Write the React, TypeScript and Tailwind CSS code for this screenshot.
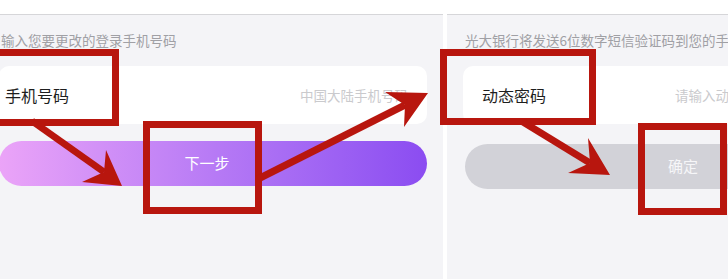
import React from "react";

const RED = "#b8160e";

function Arrow({ x1, y1, nx, ny, tip, b1, b2 }: { x1: number; y1: number; nx: number; ny: number; tip: [number, number]; b1: [number, number]; b2: [number, number] }) {
  return (
    <g>
      <line x1={x1} y1={y1} x2={nx} y2={ny} stroke={RED} strokeWidth={7} strokeLinecap="butt" />
      <polygon points={`${b1[0]},${b1[1]} ${tip[0]},${tip[1]} ${b2[0]},${b2[1]} ${nx},${ny}`} fill={RED} />
    </g>
  );
}

export default function App() {
  return (
    <div
      className="relative w-[728px] h-[279px] overflow-hidden bg-white flex gap-[4px]"
      style={{ fontFamily: '"Noto Sans CJK SC", "Noto Sans", sans-serif' }}
    >
      {/* Left panel */}
      <div className="w-[443px] shrink-0 flex flex-col bg-[#f4f4f7]">
        <div className="h-[15px] bg-white border-b border-[#d6d6d9]" />
        <div className="flex flex-col pr-[16px] -ml-[1px]">
          <p className="mt-[16px] pl-[2px] text-[13.5px] leading-[18px] text-[#a0a0a5]">输入您要更改的登录手机号码</p>
          <div className="mt-[17px] h-[58px] rounded-[10px] bg-white flex items-center justify-between pl-[6px] pr-[19px]">
            <span className="text-[16px] text-[#1e1e1e]">手机号码</span>
            <span className="text-[13.5px] text-[#cacacd]">中国大陆手机号码</span>
          </div>
          <div className="mt-[17px] h-[45px] rounded-full bg-gradient-to-r from-[#eba4f8] via-[#b77af5] to-[#8b4cf1] flex items-center justify-center pr-[12px]">
            <span className="text-[15px] text-white">下一步</span>
          </div>
        </div>
      </div>

      {/* Right panel */}
      <div className="flex-1 min-w-0 flex flex-col bg-[#f4f4f7] overflow-hidden">
        <div className="h-[15px] bg-white border-b border-[#d6d6d9]" />
        <div className="flex flex-col pl-[16px]">
          <p className="mt-[16px] pl-[2px] text-[13.5px] leading-[18px] text-[#a0a0a5] whitespace-nowrap">光大银行将发送6位数字短信验证码到您的手机</p>
          <div className="mt-[17px] h-[58px] w-[428px] shrink-0 rounded-[10px] bg-white flex items-center pl-[19px]">
            <span className="w-[193px] shrink-0 text-[16px] text-[#1e1e1e]">动态密码</span>
            <span className="text-[13.5px] text-[#cacacd] whitespace-nowrap">请输入动态密码</span>
          </div>
          <div className="mt-[20px] h-[45px] w-[428px] shrink-0 ml-[2px] rounded-full bg-[#d2d2d8] flex items-center justify-center pl-[8px]">
            <span className="text-[15px] text-[#f6f6f8]">确定</span>
          </div>
        </div>
      </div>

      {/* Annotations */}
      <div className="pointer-events-none absolute inset-0">
        <div className="absolute left-[-12px] top-[49px] w-[131px] h-[77px] border-[7px] border-[#b8160e]" />
        <div className="absolute left-[143px] top-[121px] w-[119px] h-[93px] border-[7px] border-[#b8160e]" />
        <div className="absolute left-[440px] top-[49px] w-[156px] h-[76px] border-[7px] border-[#b8160e]" />
        <div className="absolute left-[638px] top-[123px] w-[89px] h-[92px] border-[7px] border-[#b8160e]" />
        <svg className="absolute inset-0" width="728" height="279" viewBox="0 0 728 279">
          <Arrow x1={32} y1={121} nx={104} ny={172} tip={[122, 186]} b1={[82, 182]} b2={[106, 150]} />
          <Arrow x1={258} y1={179} nx={405} ny={105} tip={[428, 93]} b1={[385, 92]} b2={[404, 127]} />
          <Arrow x1={523} y1={122} nx={590} ny={163} tip={[610, 175]} b1={[568, 173]} b2={[588, 138]} />
        </svg>
      </div>
    </div>
  );
}
